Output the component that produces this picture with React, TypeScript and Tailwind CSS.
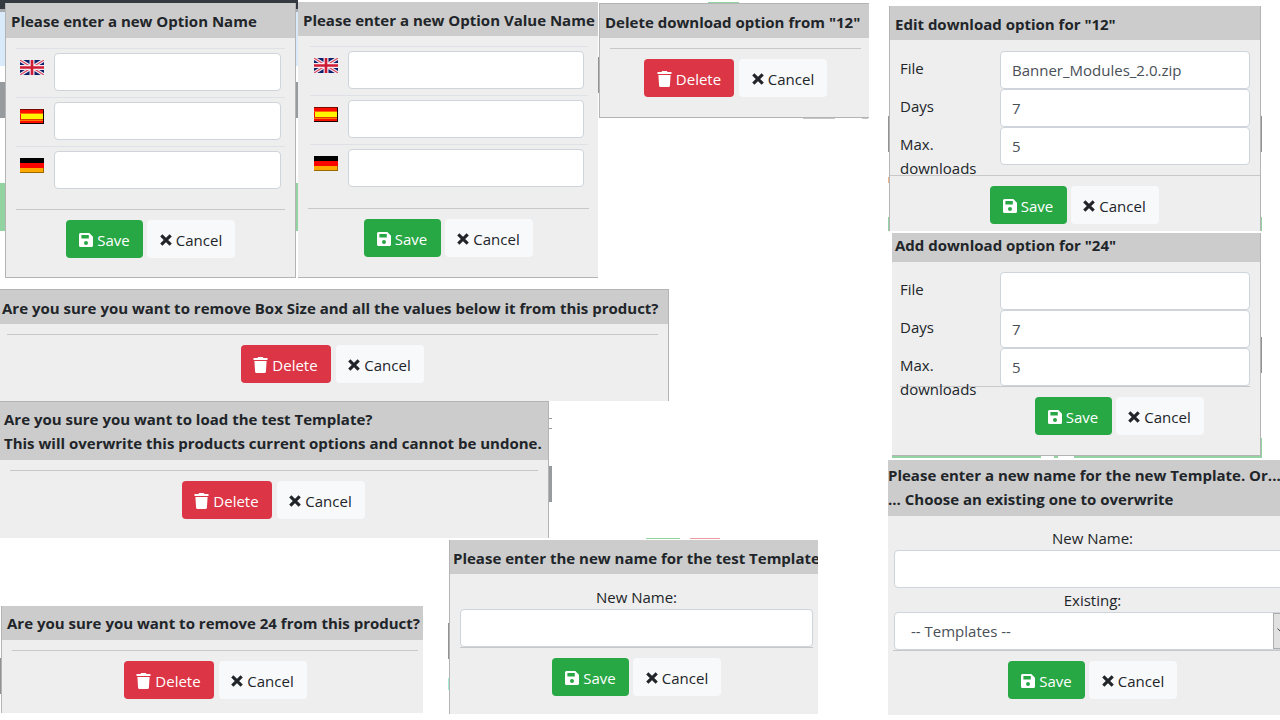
import type { ReactNode } from "react";
import { useId } from "react";

function UkFlag() {
  return (
    <svg role="img" aria-label="English" width="24" height="15" viewBox="0 0 24 15">
      <rect width="24" height="15" fill="#0b1f6b" />
      <path d="M0 0L24 15M24 0L0 15" stroke="#f3eef4" strokeWidth="3.4" />
      <path d="M0 0L24 15M24 0L0 15" stroke="#dd4a5e" strokeWidth="1.1" />
      <path d="M12 0V15M0 7.5H24" stroke="#f6e9ee" strokeWidth="5" />
      <path d="M12 0V15M0 7.5H24" stroke="#cf1b34" strokeWidth="2.6" />
    </svg>
  );
}

function SpainFlag() {
  return (
    <svg role="img" aria-label="Español" width="24" height="15" viewBox="0 0 24 15">
      <rect width="24" height="15" fill="#190000" />
      <rect y="1" width="23" height="13" fill="#fb0d00" />
      <rect y="4" width="23" height="1" fill="#ff6a00" />
      <rect x="1" y="5" width="22" height="5" fill="#fff600" />
      <rect y="10" width="23" height="1" fill="#e03c00" />
      <rect y="11" width="23" height="1" fill="#ff7800" />
      <rect width="24" height="1" fill="#7d0a00" />
    </svg>
  );
}

function GermanyFlag() {
  return (
    <svg role="img" aria-label="Deutsch" width="24" height="15" viewBox="0 0 24 15">
      <rect width="24" height="15" fill="#9a6a00" />
      <rect width="24" height="6" fill="#000" />
      <rect y="5" width="24" height="5" fill="#fb0500" />
      <rect y="10" width="23" height="4" fill="#ffa900" />
    </svg>
  );
}

function SaveIcon() {
  return (
    <svg aria-hidden="true" width="14" height="14" viewBox="0 0 14 14" fill="currentColor">
      <path
        fillRule="evenodd"
        d="M1.5 0H10.3L14 3.7V12.5A1.5 1.5 0 0 1 12.5 14H1.5A1.5 1.5 0 0 1 0 12.5V1.5A1.5 1.5 0 0 1 1.5 0ZM2.4 2V5.6H9.8V2ZM7 7.9A2 2 0 1 0 7 11.9A2 2 0 1 0 7 7.9Z"
      />
    </svg>
  );
}

function TrashIcon() {
  return (
    <svg aria-hidden="true" width="15" height="16" viewBox="0 0 15 16" fill="currentColor">
      <path d="M0.5 1H4.5L5.1 0H9.9L10.5 1H14.5V3H0.5ZM1.4 4H13.6L12.9 14.7A1.4 1.4 0 0 1 11.5 16H3.5A1.4 1.4 0 0 1 2.1 14.7Z" />
    </svg>
  );
}

function CrossIcon() {
  return (
    <svg aria-hidden="true" width="12" height="12" viewBox="0 0 12 12" fill="none" stroke="currentColor" strokeWidth="3.1">
      <path d="M1.3 1.3L10.7 10.7M10.7 1.3L1.3 10.7" />
    </svg>
  );
}

type DialogProps = {
  title: ReactNode;
  className: string;
  headClass: string;
  children: ReactNode;
};

function Dialog({ title, className, headClass, children }: DialogProps) {
  return (
    <section className={`relative overflow-hidden border-[#b4b4b4] bg-[#eeeeee] ${className}`}>
      <h2 className={`bg-[#cccccc] font-bold whitespace-nowrap ${headClass}`}>{title}</h2>
      {children}
    </section>
  );
}

function Rule({ className = "" }: { className?: string }) {
  return <hr className={`border-t border-[#c8c8c8] ${className}`} />;
}

const button = "flex h-[38px] items-center justify-center gap-1 rounded pt-[2px]";

function Actions({ kind, className = "" }: { kind: "save" | "delete"; className?: string }) {
  return (
    <div className={`flex justify-center pt-[10px] ${kind === "save" ? "gap-1" : "gap-[5px]"} ${className}`}>
      {kind === "save" ? (
        <button type="button" className={`${button} w-[77px] bg-[#28a745] text-white`}>
          <SaveIcon />
          Save
        </button>
      ) : (
        <button type="button" className={`${button} w-[90px] bg-[#dc3545] text-white`}>
          <TrashIcon />
          Delete
        </button>
      )}
      <button type="button" className={`${button} w-[88px] bg-[#f8f9fa]`}>
        <CrossIcon />
        Cancel
      </button>
    </div>
  );
}

const field = "block h-[38px] w-full rounded border border-[#ced4da] bg-white px-[11px] text-[#495057]";

function LanguageFields({ className = "" }: { className?: string }) {
  const id = useId();
  const flags = [
    { code: "en", flag: <UkFlag /> },
    { code: "es", flag: <SpainFlag /> },
    { code: "de", flag: <GermanyFlag /> },
  ];
  return (
    <div className={className}>
      {flags.map(({ code, flag }) => (
        <div key={code} className="flex h-[49px] items-start border-t border-[#dee2e6] px-1 pt-1">
          <label htmlFor={`${id}-${code}`} className="w-[34px] shrink-0 pt-[7px]">
            {flag}
          </label>
          <input id={`${id}-${code}`} type="text" className={field} />
        </div>
      ))}
    </div>
  );
}

function DownloadFields({ file, className = "" }: { file: string; className?: string }) {
  const id = useId();
  const rows = [
    { key: "file", label: "File", value: file },
    { key: "days", label: "Days", value: "7" },
    { key: "max", label: "Max. downloads", value: "5" },
  ];
  return (
    <div className={className}>
      {rows.map(({ key, label, value }) => (
        <div key={key} className="flex h-[38px] items-start">
          <label htmlFor={`${id}-${key}`} className="relative z-10 w-20 shrink-0 pt-[5px]">
            {label}
          </label>
          <input id={`${id}-${key}`} type="text" defaultValue={value} className={`${field} ml-5`} />
        </div>
      ))}
    </div>
  );
}

/* Slivers of the product page that show between the dialogs. */
const slivers = [
  "left-0 top-0 h-[9px] w-[298px] bg-[#343a40]",
  "left-0 top-[9px] h-[3px] w-[298px] bg-[#a9acaf]",
  "left-0 top-3 h-[54px] w-[298px] bg-[#d9eafb]",
  "left-0 top-[82px] h-9 w-[298px] bg-[#989b9e]",
  "left-0 top-[183px] h-12 w-[298px] bg-[#93d3a2]",
  "left-[708px] top-[2px] h-px w-[31px] bg-[#93d3a2]",
  "left-[598px] top-[57px] h-9 w-px bg-[#8f9295]",
  "left-[803px] top-[118px] h-px w-8 bg-[#c4c6c8]",
  "left-[862px] top-[118px] h-px w-[6px] bg-[#c4c6c8]",
  "left-[888px] top-[116px] h-9 w-px bg-[#8f9295]",
  "left-[1261px] top-[116px] h-9 w-px bg-[#8f9295]",
  "left-[888px] top-[177px] h-[6px] w-px bg-[#f2b48c]",
  "left-[888px] top-[217px] h-[14px] w-px bg-[#93d3a2]",
  "left-[1261px] top-[217px] h-[14px] w-px bg-[#93d3a2]",
  "left-[1261px] top-[337px] h-9 w-px bg-[#8f9295]",
  "left-[892px] top-[438px] h-5 w-[370px] bg-[#93d3a2]",
  "left-[1041px] top-[456px] h-[2px] w-[13px] bg-white",
  "left-[1058px] top-[456px] h-[2px] w-4 bg-white",
  "left-[549px] top-[418px] h-px w-[3px] bg-[#9a9a9a]",
  "left-[549px] top-[428px] h-px w-[3px] bg-[#9a9a9a]",
  "left-[549px] top-[466px] h-9 w-[3px] bg-[#989b9e]",
  "left-[646px] top-[538px] h-px w-[34px] bg-[#93d3a2]",
  "left-[690px] top-[538px] h-px w-[30px] bg-[#ee9aa2]",
  "left-[448px] top-[623px] h-9 w-px bg-[#8f9295]",
  "left-[448px] top-[678px] h-3 w-px bg-[#a5ecd2]",
  "left-0 top-[658px] h-9 w-px bg-[#8f9295]",
];

export default function App() {
  const id = useId();
  return (
    <main className="relative flex min-h-screen items-start overflow-hidden bg-white font-['Open_Sans','Noto_Sans',sans-serif] text-[15px] leading-6 text-[#212529]">
      <div aria-hidden="true">
        {slivers.map((place) => (
          <span key={place} className={`absolute ${place}`} />
        ))}
      </div>

      <div className="w-[888px] shrink-0">
        <div className="flex h-[289px] items-start">
          <Dialog
            title="Please enter a new Option Name"
            className="mt-[3px] ml-[5px] w-[291px] border-x border-b"
            headClass="px-[5px] pt-[6px] pb-[5px]"
          >
            <LanguageFields className="mx-[10px] pt-[10px]" />
            <Rule className="mx-[10px] mt-[14px]" />
            <Actions kind="save" className="pb-[19px]" />
          </Dialog>
          <Dialog
            title="Please enter a new Option Value Name"
            className="mt-[2px] ml-[2px] w-[300px] border-b"
            headClass="px-[5px] pt-[6px] pb-1"
          >
            <LanguageFields className="mr-[10px] ml-3 pt-[10px]" />
            <Rule className="mr-[9px] ml-[10px] mt-[15px]" />
            <Actions kind="save" className="pb-[20px]" />
          </Dialog>
          <Dialog
            title={'Delete download option from "12"'}
            className="mt-[3px] ml-px w-[270px] border-t border-b border-l"
            headClass="px-[5px] pt-[6px] pb-1"
          >
            <Rule className="mr-2 ml-[10px] mt-[10px]" />
            <Actions kind="delete" className="pb-[20px] pl-[2px]" />
          </Dialog>
        </div>

        <Dialog
          title="Are you sure you want to remove Box Size and all the values below it from this product?"
          className="w-[669px] border-t border-r"
          headClass="px-[2px] pt-[6px] pb-1"
        >
          <Rule className="mr-[10px] ml-[7px] mt-[10px]" />
          <Actions kind="delete" className="pr-1 pb-[18px]" />
        </Dialog>

        <Dialog
          title={
            <>
              Are you sure you want to load the test Template?
              <br />
              This will overwrite this products current options and cannot be undone.
            </>
          }
          className="w-[549px] border-t border-r"
          headClass="px-1 py-[5px]"
        >
          <Rule className="mx-[10px] mt-[10px]" />
          <Actions kind="delete" className="pr-[2px] pb-[19px]" />
        </Dialog>

        <div className="flex items-start">
          <Dialog
            title="Are you sure you want to remove 24 from this product?"
            className="mt-[68px] ml-px w-[422px] border-l"
            headClass="px-[5px] py-[5px]"
          >
            <Rule className="mr-[5px] ml-[10px] mt-[10px]" />
            <Actions kind="delete" className="pb-[14px] pl-[5px]" />
          </Dialog>
          <Dialog
            title="Please enter the new name for the test Template"
            className="mt-[2px] ml-[26px] w-[369px] border-l"
            headClass="px-[3px] pt-[6px] pb-1"
          >
            <div className="mr-[5px] ml-[10px] pt-[11px] text-center">
              <label htmlFor={`${id}-rename`}>New Name:</label>
              <input id={`${id}-rename`} type="text" className={field} />
            </div>
            <Rule className="mr-[5px] ml-[10px]" />
            <Actions kind="save" className="pb-[18px] pl-[5px]" />
          </Dialog>
        </div>
      </div>

      <div className="min-w-0 flex-1 overflow-hidden">
        <Dialog
          title={'Edit download option for "12"'}
          className="mt-[6px] ml-px w-[372px] border-x"
          headClass="px-[5px] pt-[6px] pb-1"
        >
          <DownloadFields file="Banner_Modules_2.0.zip" className="mx-[10px] pt-[11px]" />
          <Rule className="mt-[10px]" />
          <Actions kind="save" className="pr-[2px] pb-[7px]" />
        </Dialog>
        <Dialog
          title={'Add download option for "24"'}
          className="mt-[2px] ml-1 w-[369px] border-r border-b"
          headClass="px-[3px] pb-[5px]"
        >
          <DownloadFields file="" className="mr-[10px] ml-2 pt-[10px]" />
          <Rule className="mr-[10px] ml-2" />
          <Actions kind="save" className="pb-[20px] pl-[86px]" />
        </Dialog>
        <Dialog
          title={
            <>
              Please enter a new name for the new Template. Or...
              <br />
              ... Choose an existing one to overwrite
            </>
          }
          className="mt-1 w-[409px]"
          headClass="pt-[3px] pb-[5px]"
        >
          <div className="mx-[6px] pt-[10px] text-center">
            <label htmlFor={`${id}-new`}>New Name:</label>
            <input id={`${id}-new`} type="text" className={field} />
            <label htmlFor={`${id}-existing`}>Existing:</label>
            <div className="relative">
              <select id={`${id}-existing`} className={`${field} appearance-none pl-4`}>
                <option>-- Templates --</option>
              </select>
              <span className="pointer-events-none absolute top-px right-px flex h-9 w-[17px] items-center justify-center border border-[#adadad] bg-[#e1e1e1]">
                <svg width="9" height="6" viewBox="0 0 9 6" fill="none" stroke="#444" aria-hidden="true">
                  <path d="M0.5 0.5L4.5 4.5L8.5 0.5" />
                </svg>
              </span>
            </div>
          </div>
          <Rule className="mx-[5px]" />
          <Actions kind="save" className="pb-4" />
        </Dialog>
      </div>
    </main>
  );
}
